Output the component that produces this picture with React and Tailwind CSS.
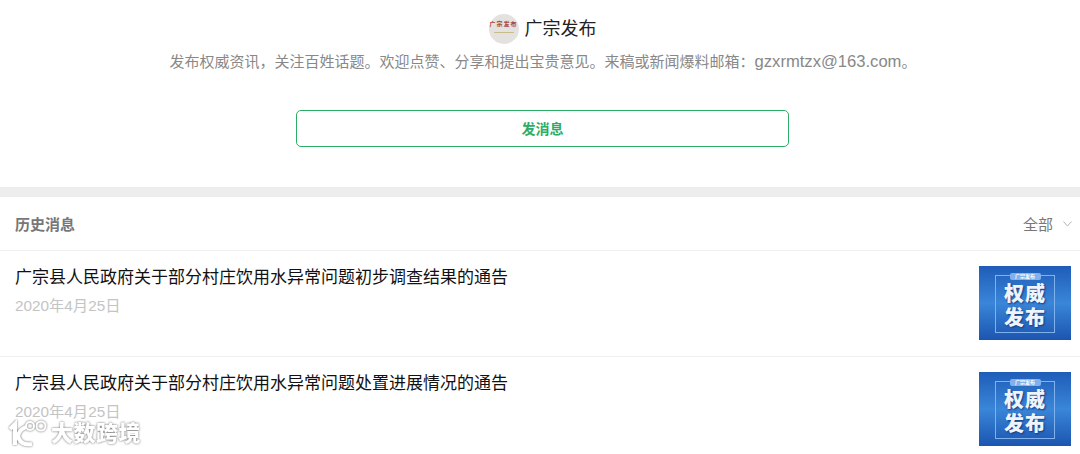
import React from "react";

const font = { fontFamily: '"Liberation Sans","Noto Sans CJK SC",sans-serif' };

function Thumb() {
  return (
    <div className="w-[92px] h-[74px] shrink-0 bg-gradient-to-b from-[#1f5cb8] via-[#3a86d8] to-[#1c55b0] flex items-center justify-center">
      <div className="w-[60px] h-[58px] mt-[1px] border border-[#7fb2ec] flex flex-col items-center relative">
        <div className="absolute top-[-3px] w-[31px] h-[7px] rounded-[2px] bg-[#7fb2ec] text-[5px] leading-[7px] text-white text-center font-bold">广宗发布</div>
        <div className="mt-[6px] text-[20px] leading-[24px] font-black text-[#eef4fb] tracking-[1px] [text-shadow:1px_1px_2px_#123a80] whitespace-nowrap">权威</div>
        <div className="text-[20px] leading-[24px] font-black text-[#eef4fb] tracking-[1px] [text-shadow:1px_1px_2px_#123a80] whitespace-nowrap">发布</div>
      </div>
    </div>
  );
}

function Item({ title, border }) {
  return (
    <div className={`flex justify-between h-[106px] pl-[15px] pr-[9px] pt-[15px] ${border ? "border-b border-[#f0f0f0]" : ""}`}>
      <div>
        <div className="text-[17px] leading-[24px] text-[#111]">{title}</div>
        <div className="text-[15.3px] leading-[20px] mt-[6px] text-[#c4c4c4]">2020年4月25日</div>
      </div>
      <Thumb />
    </div>
  );
}

export default function App() {
  return (
    <div className="relative w-[1080px] h-[454px] overflow-hidden bg-white" style={font}>
      <div className="h-[187px] flex flex-col items-center">
        <div className="flex items-center h-[30px] mt-[14px] ml-[5px]">
          <div className="w-[30px] h-[30px] rounded-full bg-[#e4e2df] flex flex-col items-center">
            <div className="mt-[6px] text-[6px] leading-[8px] text-[#a8453a] font-bold whitespace-nowrap tracking-[1px]">广宗发布</div>
            <div className="w-[20px] h-[1px] mt-[4px] bg-[#c9bb8a]" />
          </div>
          <div className="ml-[6px] text-[18px] leading-[24px] text-[#222]">广宗发布</div>
        </div>
        <div className="mt-[7px] text-[15px] leading-[21px] text-[#888] whitespace-nowrap ml-[6px]">
          发布权威资讯，关注百姓话题。欢迎点赞、分享和提出宝贵意见。来稿或新闻爆料邮箱：<span className="text-[16.6px]">gzxrmtzx@163.com</span>。
        </div>
        <div className="mt-[38px] ml-[5px] w-[493px] h-[37px] rounded-[5px] border border-[#2aae67] flex items-center justify-center text-[14px] font-bold text-[#2aae67] pt-[1px]">
          发消息
        </div>
      </div>
      <div className="h-[10px] bg-[#ededed]" />
      <div className="h-[54px] flex items-center justify-between pl-[15px] pr-[8px] border-b border-[#f0f0f0] pt-[3px]">
        <div className="text-[15px] font-bold text-[#777]">历史消息</div>
        <div className="flex items-center text-[15px] text-[#777]">
          全部
          <svg className="ml-[10px] mb-[3px]" width="9" height="6" viewBox="0 0 9 6" fill="none" stroke="#b5b5b5" strokeWidth="1">
            <path d="M0.5 0.5 L4.5 5 L8.5 0.5" />
          </svg>
        </div>
      </div>
      <Item title="广宗县人民政府关于部分村庄饮用水异常问题初步调查结果的通告" border />
      <Item title="广宗县人民政府关于部分村庄饮用水异常问题处置进展情况的通告" />
      <div className="absolute left-[9px] top-[420px] flex items-center text-white [filter:drop-shadow(0_0_1px_#666)]">
        <svg width="40" height="28" viewBox="0 0 40 28" fill="none" stroke="#fff">
          <path d="M1 9 L6 4 V25" strokeWidth="4" />
          <path d="M17 7 C10 10 8 15 10 19 C12 23 17 25 23 24" strokeWidth="4" />
          <circle cx="21" cy="6" r="4" strokeWidth="2" />
          <circle cx="32" cy="6" r="4.5" strokeWidth="2" />
        </svg>
        <div className="ml-[2px] text-[22px] leading-[28px] font-black tracking-[0.5px]">大数跨境</div>
      </div>
    </div>
  );
}
